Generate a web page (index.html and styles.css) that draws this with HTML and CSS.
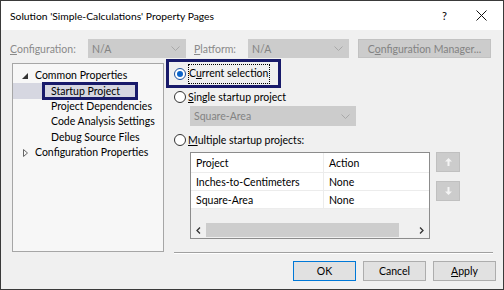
FILE: index.html
```html
<!DOCTYPE html>
<html>
<head>
<meta charset="utf-8">
<link rel="stylesheet" href="styles.css">
</head>
<body>
<div class="dialog">
  <div class="titlebar">
    <span class="title">Solution 'Simple-Calculations' Property Pages</span>
    <span class="help">?</span>
    <svg class="close" width="11" height="11" viewBox="0 0 11 11"><path d="M0.5 0.5 L10.5 10.5 M10.5 0.5 L0.5 10.5" stroke="#111" stroke-width="1" fill="none"/></svg>
  </div>

  <div class="config-row">
    <span class="lbl lbl-config"><u>C</u>onfiguration:</span>
    <div class="combo combo-config"><span>N/A</span><svg class="chev" width="9" height="5" viewBox="0 0 9 5"><polyline points="0.5,0.5 4.5,4.5 8.5,0.5" stroke="#a8a8a8" fill="none"/></svg></div>
    <span class="lbl lbl-platform"><u>P</u>latform:</span>
    <div class="combo combo-platform"><span>N/A</span><svg class="chev" width="9" height="5" viewBox="0 0 9 5"><polyline points="0.5,0.5 4.5,4.5 8.5,0.5" stroke="#a8a8a8" fill="none"/></svg></div>
    <div class="btn-disabled">C<u>o</u>nfiguration Manager...</div>
  </div>

  <div class="main">
    <div class="tree">
      <div class="node top"><svg class="exp" width="6" height="6" viewBox="0 0 6 6"><polygon points="6,0 6,6 0,6" fill="#333"/></svg>Common Properties</div>
      <div class="node sel"><span class="sel-box">Startup Project</span></div>
      <div class="node child">Project Dependencies</div>
      <div class="node child">Code Analysis Settings</div>
      <div class="node child">Debug Source Files</div>
      <div class="node top"><svg class="col" width="5" height="8" viewBox="0 0 5 8"><polygon points="0.5,0.5 4.5,4 0.5,7.5" fill="none" stroke="#666"/></svg>Configuration Properties</div>
    </div>

    <div class="right">
      <div class="hl-box">
        <div class="radio-row"><span class="radio on"></span><span class="focus">C<u>u</u>rrent selection</span></div>
      </div>
      <div class="radio-row plain"><span class="radio"></span><span><u>S</u>ingle startup project</span></div>
      <div class="combo combo-single"><span>Square-Area</span><svg class="chev" width="9" height="5" viewBox="0 0 9 5"><polyline points="0.5,0.5 4.5,4.5 8.5,0.5" stroke="#a8a8a8" fill="none"/></svg></div>
      <div class="radio-row plain multi"><span class="radio"></span><span><u>M</u>ultiple startup projects:</span></div>

      <div class="grid-wrap">
        <div class="grid">
          <div class="grow head"><span class="c1">Project</span><span class="c2">Action</span></div>
          <div class="grow"><span class="c1">Inches-to-Centimeters</span><span class="c2">None</span></div>
          <div class="grow"><span class="c1">Square-Area</span><span class="c2">None</span></div>
          <div class="empty"></div>
          <div class="hscroll">
            <svg class="sarrow" width="5" height="7" viewBox="0 0 5 7"><polyline points="4,0.5 1,3.5 4,6.5" stroke="#333" stroke-width="1.3" fill="none"/></svg>
            <div class="thumb"></div>
            <svg class="sarrow" width="5" height="7" viewBox="0 0 5 7"><polyline points="1,0.5 4,3.5 1,6.5" stroke="#333" stroke-width="1.3" fill="none"/></svg>
          </div>
        </div>
        <div class="movers">
          <div class="mover"><svg width="7" height="8" viewBox="0 0 7 8"><path d="M3.5 0 L7 3.5 L4.5 3.5 L4.5 8 L2.5 8 L2.5 3.5 L0 3.5 Z" fill="#f4f4f4"/></svg></div>
          <div class="mover"><svg width="7" height="8" viewBox="0 0 7 8"><path d="M3.5 8 L7 4.5 L4.5 4.5 L4.5 0 L2.5 0 L2.5 4.5 L0 4.5 Z" fill="#f4f4f4"/></svg></div>
        </div>
      </div>
      <div class="separator"></div>
    </div>
  </div>

  <div class="buttons">
    <div class="btn default">OK</div>
    <div class="btn">Cancel</div>
    <div class="btn"><u>A</u>pply</div>
  </div>
</div>
</body>
</html>
```
FILE: styles.css
```css
* { box-sizing: border-box; }
html, body { margin: 0; padding: 0; }
body {
  width: 504px;
  height: 290px;
  font-family: Lato, "Noto Sans", sans-serif;
  font-size: 10.5px;
  color: #000;
}
u { text-decoration: underline; text-underline-offset: 1px; }

.dialog {
  width: 504px;
  height: 290px;
  border: 1px solid #3a3a3a;
  background: #f0f0f0;
  display: flex;
  flex-direction: column;
}

.titlebar {
  height: 29px;
  background: #fff;
  display: flex;
  align-items: center;
  padding-left: 9px;
}
.title { flex: 1; font-size: 10.3px; }
.help { font-size: 11px; margin-right: 29px; }
.close { margin-right: 16px; }

.config-row {
  margin-top: 9px;
  height: 19px;
  display: flex;
  align-items: center;
  padding-left: 9px;
  color: #8a8a8a;
}
.lbl-config { width: 78px; }
.lbl-platform { width: 54px; margin-left: 8px; }
.combo {
  height: 19px;
  background: #cccccc;
  display: flex;
  align-items: center;
  justify-content: space-between;
  padding: 0 6px 0 4px;
  color: #838383;
}
.combo-config { width: 98px; }
.combo-platform { width: 101px; }
.btn-disabled {
  margin-left: 9px;
  width: 133px;
  height: 19px;
  background: #cccccc;
  border: 1px solid #c2c2c2;
  display: flex;
  align-items: center;
  justify-content: center;
  color: #838383;
}

.main {
  margin-top: 1px;
  display: flex;
  align-items: flex-start;
}

.tree {
  margin-left: 11px;
  margin-top: 4px;
  width: 152px;
  height: 189px;
  border: 1px solid #a6a6a6;
  background: #f7f7f7;
  padding-top: 4px;
}
.node {
  height: 15.4px;
  line-height: 15.4px;
  white-space: nowrap;
  display: flex;
  align-items: center;
}
.node.top { padding-left: 9px; }
.node.top svg { margin-right: 7px; }
.node .col { margin-left: 1px; margin-right: 7px; }
.node.child { padding-left: 38px; }
.node.sel {
  margin-left: 0;
  width: 125px;
  background: #d6d7e1;
  padding-left: 29px;
}
.sel-box {
  flex: 1;
  height: 18px;
  line-height: 12px;
  border: 3px solid #181a6a;
  padding-left: 6px;
  margin: -1px 0;
}

.right {
  margin-left: 2px;
  width: 327px;
  display: flex;
  flex-direction: column;
}
.hl-box {
  width: 115px;
  height: 29px;
  border: 3px solid #181a6a;
  padding-left: 5px;
  display: flex;
  align-items: center;
}
.radio-row {
  height: 18px;
  display: flex;
  align-items: center;
  white-space: nowrap;
}
.radio-row.plain { padding-left: 8px; }
.radio {
  width: 12px;
  height: 12px;
  border-radius: 50%;
  border: 1px solid #333;
  background: #fff;
  margin-right: 2px;
  position: relative;
  flex: none;
}
.radio.on { border-color: #1b4f9c; }
.radio.on::after {
  content: "";
  position: absolute;
  left: 2px; top: 2px;
  width: 6px; height: 6px;
  border-radius: 50%;
  background: #0a63c9;
}
.focus {
  border: 1px dotted #000;
  padding: 1px 1px 2px 0;
  line-height: 15px;
}
.combo-single {
  margin-left: 24px;
  width: 166px;
  height: 20px;
}
.multi { margin-top: 5px; }

.grid-wrap {
  margin-top: 3px;
  margin-left: 24px;
  display: flex;
  align-items: flex-start;
}
.grid {
  width: 240px;
  height: 87px;
  border: 1px solid #8c8c8c;
  background: #f0f0f0;
  display: flex;
  flex-direction: column;
}
.grow {
  height: 18px;
  display: flex;
  align-items: center;
  background: #fff;
  border-bottom: 1px solid #ececec;
}
.grow.head { height: 20px; }
.grow .c1 { width: 133px; padding-left: 5px; border-right: 1px solid #ececec; height: 100%; display: flex; align-items: center; }
.grow .c2 { padding-left: 5px; }
.empty { height: 13px; }
.hscroll {
  height: 16px;
  display: flex;
  align-items: center;
  padding: 0 5px 0 5px;
}
.thumb {
  flex: 1;
  height: 14px;
  background: #cdcdcd;
  margin: 0 20px 0 5px;
}

.movers {
  margin-left: 6px;
  display: flex;
  flex-direction: column;
  gap: 9px;
}
.mover {
  width: 24px;
  height: 20px;
  background: #cccccc;
  border: 1px solid #c0c0c0;
  display: flex;
  align-items: center;
  justify-content: center;
}

.separator {
  margin-top: 13px;
  margin-left: 8px;
  height: 1px;
  background: #a0a0a0;
  box-shadow: 0 1px 0 #fff;
}

.buttons {
  margin-top: 8px;
  display: flex;
  justify-content: flex-end;
  gap: 7px;
  padding-right: 7px;
}
.btn {
  width: 63px;
  height: 20px;
  background: #e1e1e1;
  border: 1px solid #adadad;
  display: flex;
  align-items: center;
  justify-content: center;
}
.btn.default { border-color: #0078d7; }
```
